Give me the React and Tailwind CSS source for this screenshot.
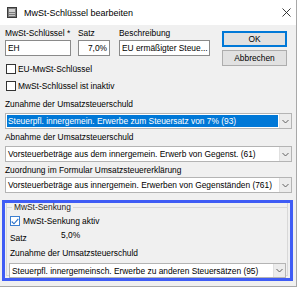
import React from "react";

const font = { fontFamily: '"Liberation Sans", Arial, sans-serif' };

function Chevron() {
  return (
    <svg width="7" height="5" viewBox="0 0 7 5" className="block">
      <path d="M0.5 1 L3.5 4 L6.5 1" fill="none" stroke="#606060" strokeWidth="1" />
    </svg>
  );
}

function Select({ text, selected, w, h = "h-[16px]" }) {
  return (
    <div className={`flex ${h} ${w} border border-[#b4b4b4] bg-white`}>
      <div className="flex-1 min-w-0 p-[1px]">
        <div
          className={`h-full flex items-center pl-[1px] whitespace-nowrap overflow-hidden ${
            selected ? "bg-[#0078d7] text-white" : "text-black"
          }`}
        >
          {text}
        </div>
      </div>
      <div className="w-[12px] flex items-center justify-center bg-[#ececec] border-l border-[#e0e0e0]">
        <Chevron />
      </div>
    </div>
  );
}

function Check({ checked, children, blue, gap = "ml-[2px]" }) {
  return (
    <div className="flex items-center h-[12px]">
      <div
        className={`w-[10px] h-[10px] border shrink-0 ${
          blue ? "border-[#3c7fd0]" : "border-[#333333]"
        } bg-white flex items-center justify-center`}
      >
        {checked && (
          <svg width="8" height="7" viewBox="0 0 8 7">
            <path d="M0.7 3.5 L3 5.8 L7.3 0.9" fill="none" stroke="#2a70c8" strokeWidth="1.1" />
          </svg>
        )}
      </div>
      <span className={gap}>{children}</span>
    </div>
  );
}

export default function App() {
  return (
    <div className="w-[300px] h-[292px] bg-white relative overflow-hidden text-[8.4px] leading-[12px] text-black" style={font}>
      <div className="w-[297px] h-[287px] border-r border-b border-[#a8a8a8] bg-[#f0f0f0] flex flex-col">
        {/* title bar */}
        <div className="h-[25px] bg-white flex items-center pl-[7px] pr-[5px] shrink-0">
          <svg width="10" height="11" viewBox="0 0 10 11" className="shrink-0">
            <rect x="0.5" y="0.5" width="9" height="10" fill="#7c7c7c" stroke="#3a3a3a" />
            <rect x="2" y="2" width="6" height="3" fill="#d0d0d0" />
            <rect x="2" y="6" width="6" height="1" fill="#c8c8c8" />
            <rect x="2" y="8" width="6" height="1" fill="#c8c8c8" />
          </svg>
          <span className="ml-[7px] text-[9px] text-black">MwSt-Schlüssel bearbeiten</span>
          <div className="flex-1" />
          <svg width="9" height="9" viewBox="0 0 9 9" className="mr-[0px]">
            <path d="M0.5 0.5 L8.5 8.5 M8.5 0.5 L0.5 8.5" stroke="#222" strokeWidth="0.9" />
          </svg>
        </div>

        <div className="pl-[5px] flex flex-col">
          {/* top row */}
          <div className="flex">
            <div className="flex flex-col w-[217px]">
              <div className="flex mt-[2px] h-[12px]">
                <div className="w-[73px]">MwSt-Schlüssel *</div>
                <div className="w-[41px]">Satz</div>
                <div>Beschreibung</div>
              </div>
              <div className="flex mt-[1px]">
                <div className="w-[66px] h-[16px] border border-[#8a8a8a] bg-white flex items-center pl-[2px]">EH</div>
                <div className="w-[32px] h-[16px] ml-[7px] border border-[#8a8a8a] bg-white flex items-center justify-end pr-[2px]">7,0%</div>
                <div className="w-[91px] h-[16px] ml-[9px] border border-[#8a8a8a] bg-white flex items-center pl-[2px] whitespace-nowrap overflow-hidden">EU ermäßigter Steue...</div>
              </div>
              <div className="mt-[7px] ml-[1px] flex flex-col gap-[5px]">
                <Check>EU-MwSt-Schlüssel</Check>
                <Check>MwSt-Schlüssel ist inaktiv</Check>
              </div>
            </div>
            <div className="flex flex-col mt-[6px]">
              <div className="w-[65px] h-[16px] border border-[#0078d7] bg-[#e1e1e1] flex items-center justify-center shadow-[inset_0_0_0_1px_#0078d7]">OK</div>
              <div className="w-[65px] h-[16px] mt-[3px] border border-[#adadad] bg-[#e1e1e1] flex items-center justify-center">Abbrechen</div>
            </div>
          </div>

          <div className="mt-[6px] h-[12px]">Zunahme der Umsatzsteuerschuld</div>
          <div className="mt-[3px]">
            <Select w="w-[287px]" selected text="Steuerpfl. innergemein. Erwerbe zum Steuersatz von 7% (93)" />
          </div>
          <div className="mt-[2px] h-[12px]">Abnahme der Umsatzsteuerschuld</div>
          <div className="mt-[3px]">
            <Select w="w-[287px]" text="Vorsteuerbeträge aus dem innergemein. Erwerb von Gegenst. (61)" />
          </div>
          <div className="mt-[2px] h-[12px]">Zuordnung im Formular Umsatzsteuererklärung</div>
          <div className="mt-[1px]">
            <Select w="w-[287px]" text="Vorsteuerbeträge aus innergemein. Erwerben von Gegenständen (761)" />
          </div>
        </div>

        {/* highlighted group */}
        <div className="ml-[2px] mt-[7px] w-[291px] h-[81px] border-[3px] border-[#3f5cf5] pl-[1px] pr-[2px] pb-[2px]">
          <div className="h-full border border-[#d8d8d8] border-t-0 flex flex-col pl-[3px]">
            <div className="flex items-center h-[8px] -ml-[4px]">
              <div className="w-[6px] border-t border-[#d8d8d8]" />
              <span className="px-[2px] text-[#222]">MwSt-Senkung</span>
              <div className="flex-1 border-t border-[#d8d8d8]" />
            </div>
            <div className="mt-[4px]">
              <Check checked blue gap="ml-[3px]">MwSt-Senkung aktiv</Check>
            </div>
            <div className="flex mt-[2px] h-[15px]">
              <span className="w-[51px] mt-[3px]">Satz</span>
              <span>5,0%</span>
            </div>
            <div className="mt-[3px] h-[12px]">Zunahme der Umsatzsteuerschuld</div>
            <div className="mt-[4px] -ml-[1px]">
              <Select w="w-[277px]" h="h-[15px]" text="Steuerpfl. innergemeinsch. Erwerbe zu anderen Steuersätzen (95)" />
            </div>
          </div>
        </div>
      </div>
    </div>
  );
}
